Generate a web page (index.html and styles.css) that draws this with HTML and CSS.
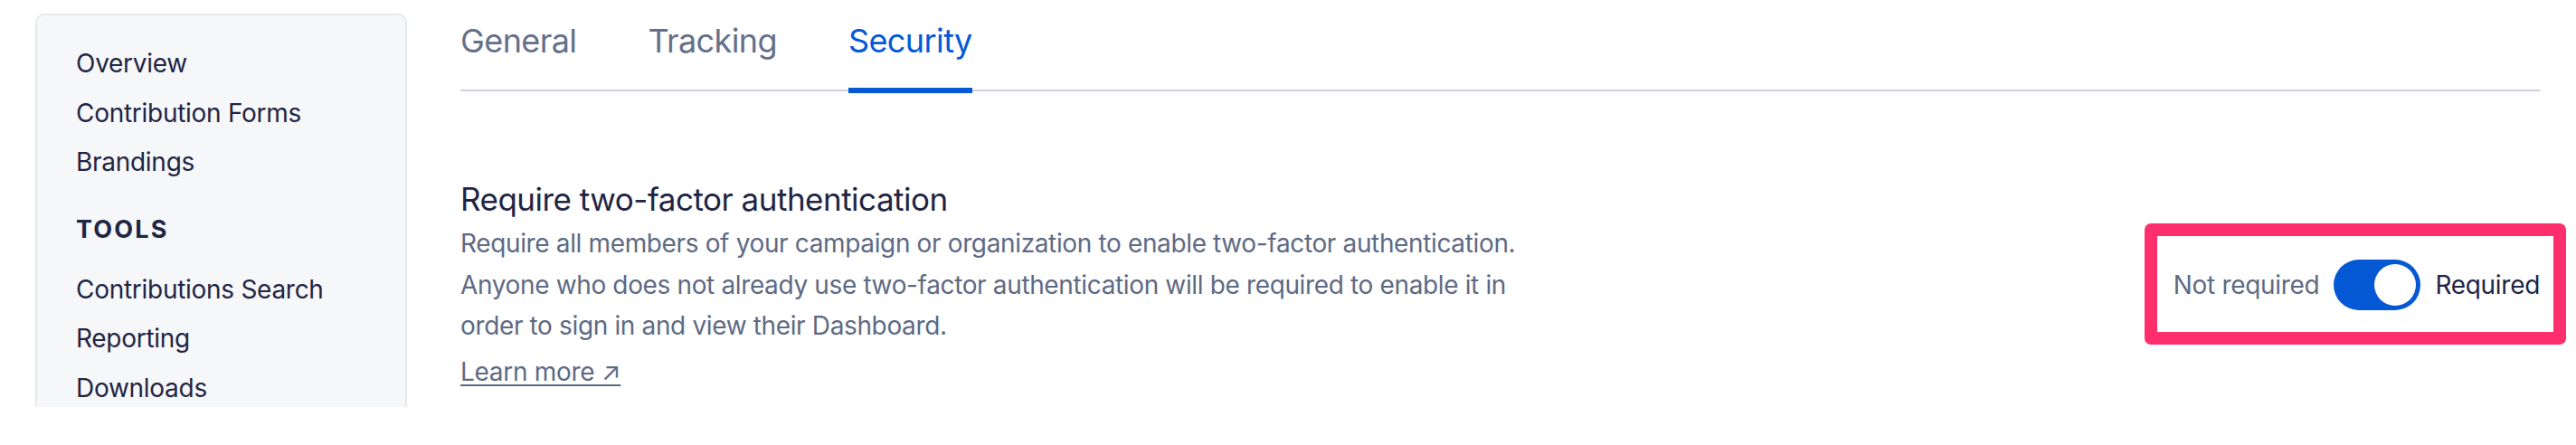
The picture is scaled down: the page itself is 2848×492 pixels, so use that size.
FILE: index.html
```html
<!DOCTYPE html>
<html lang="en">
<head>
<meta charset="utf-8">
<title>Settings - Security</title>
<link rel="stylesheet" href="styles.css">
</head>
<body>
<div class="page">
  <aside class="sidebar">
    <nav class="nav">
      <a class="nav-item" href="#">Overview</a>
      <a class="nav-item" href="#">Contribution Forms</a>
      <a class="nav-item" href="#">Brandings</a>
      <div class="nav-heading">TOOLS</div>
      <a class="nav-item" href="#">Contributions Search</a>
      <a class="nav-item" href="#">Reporting</a>
      <a class="nav-item" href="#">Downloads</a>
    </nav>
  </aside>
  <main class="main">
    <div class="tabs">
      <a class="tab" href="#">General</a>
      <a class="tab" href="#">Tracking</a>
      <a class="tab tab-active" href="#">Security</a>
    </div>
    <section class="setting">
      <div class="setting-text">
        <h2 class="setting-title">Require two-factor authentication</h2>
        <p class="setting-desc">Require all members of your campaign or organization to enable two-factor authentication. Anyone who does not already use two-factor authentication will be required to enable it in order to sign in and view their Dashboard.</p>
        <a class="learn-more" href="#">Learn more ↗</a>
      </div>
      <div class="toggle-group">
        <span class="toggle-label off">Not required</span>
        <span class="toggle on"><span class="knob"></span></span>
        <span class="toggle-label active">Required</span>
      </div>
    </section>
  </main>
</div>
</body>
</html>
```

FILE: styles.css
```css
* { box-sizing: border-box; }
html, body { margin: 0; padding: 0; background: #ffffff; }
body {
  font-family: Inter, "Noto Sans", "Liberation Sans", sans-serif;
  color: #1f2544;
  height: 492px;
  overflow: hidden;
}
a { text-decoration: none; color: inherit; }

.page {
  display: flex;
  gap: 59px;
  padding: 15px 40px 0 39px;
}

.sidebar {
  flex: 0 0 411px;
  height: 435px;
  overflow: hidden;
  background: #f6f7f9;
  border: 2px solid #e6e8ec;
  border-bottom: none;
  border-radius: 10px 10px 0 0;
  padding: 26px 20px 0 43px;
}
.nav { display: flex; flex-direction: column; }
.nav-item {
  font-size: 28px;
  line-height: 54.5px;
  letter-spacing: -0.28px;
  color: #1f2544;
  white-space: nowrap;
}
.nav-heading {
  font-size: 27px;
  font-weight: 700;
  letter-spacing: 0.08em;
  line-height: 40px;
  margin: 27px 0 19px;
  color: #1f2544;
}

.main {
  flex: 1;
  min-width: 0;
  padding-top: 3px;
}

.tabs {
  display: flex;
  gap: 79px;
  border-bottom: 2px solid #cdd1dc;
}
.tab {
  font-size: 36px;
  line-height: 54px;
  letter-spacing: -0.6px;
  color: #64708a;
  padding-bottom: 25px;
  border-bottom: 6px solid transparent;
  margin-bottom: -4px;
}
.tab-active {
  color: #0559d6;
  border-bottom-color: #0559d6;
}

.setting {
  margin-top: 95px;
  display: flex;
  align-items: center;
  justify-content: space-between;
}
.setting-text { max-width: 1200px; }
.setting-title {
  margin: 0 0 3px;
  font-size: 35px;
  font-weight: 400;
  line-height: 48px;
  letter-spacing: -0.5px;
  color: #1f2544;
}
.setting-desc {
  margin: 0;
  font-size: 28px;
  line-height: 45.5px;
  letter-spacing: -0.36px;
  color: #5e6a84;
}
.learn-more {
  display: inline-block;
  margin-top: 5px;
  font-size: 28px;
  line-height: 45.5px;
  letter-spacing: -0.3px;
  color: #5e6a84;
  text-decoration: underline;
  text-decoration-thickness: 2px;
  text-underline-offset: 4px;
}

.toggle-group {
  position: relative;
  display: flex;
  align-items: center;
  gap: 16px;
}
.toggle-group::before {
  content: "";
  position: absolute;
  top: -40px;
  bottom: -38px;
  left: -32px;
  right: -29px;
  border: 14px solid #ff2e6c;
  border-radius: 7px;
  pointer-events: none;
}
.toggle-label {
  font-size: 28px;
  line-height: 40px;
  letter-spacing: -0.3px;
  white-space: nowrap;
}
.toggle-label.off { color: #5e6a84; }
.toggle-label.active { color: #1f2544; }
.toggle {
  display: flex;
  align-items: center;
  justify-content: flex-end;
  width: 96px;
  height: 56px;
  padding: 5px;
  border-radius: 28px;
  background: #0558d4;
}
.knob {
  width: 46px;
  height: 46px;
  border-radius: 50%;
  background: #ffffff;
}
```
